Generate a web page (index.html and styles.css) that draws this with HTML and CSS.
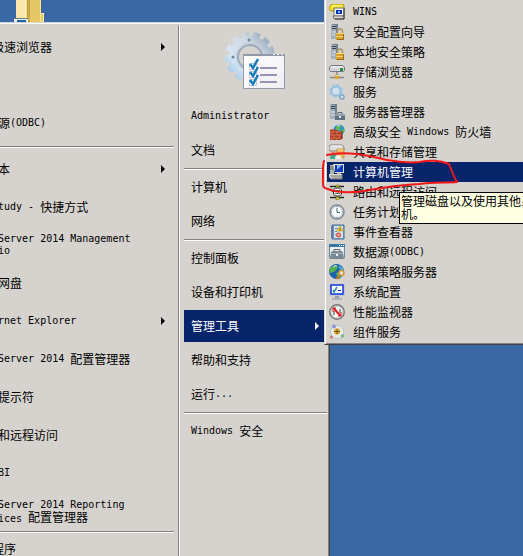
FILE: index.html
```html
<!DOCTYPE html>
<html lang="zh-CN">
<head>
<meta charset="utf-8">
<title>开始菜单</title>
<link rel="stylesheet" href="styles.css">
</head>
<body>
<svg class="folder" viewBox="0 0 34 22" aria-hidden="true">
  <path d="M3 0h24v22H3z" fill="#f3d778"/><path d="M3 0h9v18H3z" fill="#fae6ad"/><path d="M12 0h1v18h-1z" fill="#fff3c8"/>
  <path d="M14 0h3v22h-3z" fill="#c9a544"/><path d="M17 0h11v13h3v9H17z" fill="#e5c765"/><path d="M28 13h3v9h-1v-8h-2z" fill="#ffefaf"/><path d="M27 0h1v22h-1z" fill="#fae391"/>
  <path d="M1 18h14v4H1z" fill="#e9eef2"/><path d="M1 18h14v1H1z" fill="#737d86"/><path d="M4 20h9v2H4z" fill="#1c63ad"/>
</svg>
<nav class="start">
  <div class="programs">
    <a class="prog more wide" href="#">极速浏览器</a>
    <div class="prog"></div>
    <a class="prog" href="#">源<span class="lat">(ODBC)</span></a>
    <hr>
    <a class="prog more" href="#">本</a>
    <a class="prog" href="#"><span class="lat">tudy - </span>快捷方式</a>
    <a class="prog" href="#"><span class="lat">Server 2014 Management<br>io</span></a>
    <a class="prog" href="#">网盘</a>
    <a class="prog more" href="#"><span class="lat">rnet Explorer</span></a>
    <a class="prog" href="#"><span class="lat">Server 2014 </span>配置管理器</a>
    <a class="prog" href="#">提示符</a>
    <a class="prog" href="#">和远程访问</a>
    <a class="prog" href="#"><span class="lat">BI</span></a>
    <a class="prog" href="#"><span><span class="lat">Server 2014 Reporting</span><br><span class="lat">ices </span>配置管理器</span></a>
    <hr>
    <a class="prog all wide" href="#">程序</a>
  </div>
  <div class="places">
    <svg class="avatar" viewBox="0 0 64 68" aria-hidden="true">
      <defs>
        <linearGradient id="gear" gradientUnits="userSpaceOnUse" x1="8" y1="52" x2="50" y2="12"><stop offset="0" stop-color="#94bfe6"/><stop offset=".3" stop-color="#d6e6f5"/><stop offset=".7" stop-color="#cfd8e1"/><stop offset="1" stop-color="#8ea3b6"/></linearGradient>
        <linearGradient id="paper" x1="0" y1="0" x2="1" y2="1"><stop offset="0" stop-color="#fff"/><stop offset="1" stop-color="#f0ecf4"/></linearGradient>
      </defs>
      <g fill="none" stroke="url(#gear)">
        <circle cx="29" cy="30" r="16.500" stroke-width="9"/>
        <circle cx="29" cy="30" r="22" stroke-width="6" stroke-dasharray="6.500 4.133"/>
      </g>
      <circle cx="29" cy="30" r="12" fill="none" stroke="#9caaba" stroke-width="2"/>
      <circle cx="29" cy="30" r="14" fill="none" stroke="#c2cbd7" stroke-width="1"/>
      <circle cx="28" cy="13" r="1.500" fill="#71879b"/><circle cx="12" cy="30" r="1.500" fill="#71879b"/>
      <path d="M22.500 28.500h41v33h-41z" fill="url(#paper)" stroke="#9399a6"/>
      <path d="M22 27h42v2H22z" fill="#9299a8"/><path d="M52 27h2v1h-2zM56 27h2v1h-2zM60 27h2v1h-2z" fill="#e6e8ee"/>
      <path d="M39 41h17M39 48h17M39 55h17" stroke="#9993b3" stroke-width="2"/>
      <g fill="#fff" stroke="#c5c6d4"><path d="M28.500 36.500h7v6h-7zM28.500 44.500h7v6h-7zM28.500 52.500h7v6h-7z"/></g>
      <path d="M29 37l3 4 5-9M29 45l3 4 5-9M29 53l3 4 5-9" fill="none" stroke="#167bb9" stroke-width="2.500"/>
    </svg>
    <a class="place" href="#"><span class="lat">Administrator</span></a>
    <a class="place" href="#">文档</a>
    <hr>
    <a class="place" href="#">计算机</a>
    <a class="place" href="#">网络</a>
    <hr>
    <a class="place" href="#">控制面板</a>
    <a class="place" href="#">设备和打印机</a>
    <a class="place more selected" href="#">管理工具</a>
    <a class="place" href="#">帮助和支持</a>
    <a class="place" href="#">运行<span class="lat">...</span></a>
    <hr>
    <a class="place" href="#"><span class="lat">Windows </span>安全</a>
  </div>
</nav>

<nav class="tools">
  <a class="tool" href="#"><svg viewBox="0 0 16 16" aria-hidden="true"><path d="M1 2l2-2h11l1 2v3H5v2H2L0 5V3z" fill="#f5df20" stroke="#8c7900" stroke-width=".7"/><path d="M3 2h10" stroke="#fffca0"/><path d="M5 4h10v8H5z" fill="#f1f1ee" stroke="#777"/><path d="M7 6h6v4H7z" fill="#0829b8"/><path d="M9 7h2v2H9z" fill="#62ddec"/><path d="M4 12h11v3H5z" fill="#d7d7d2" stroke="#555" stroke-width=".7"/><path d="M15 4v11H6" fill="none" stroke="#333"/></svg><span class="lat">WINS</span></a>
  <a class="tool" href="#"><svg viewBox="0 0 16 16" aria-hidden="true"><path d="M2 1l2-1h5v14l-2 1H2z" fill="#71808e"/><path d="M2 1h5v14H2z" fill="#a3b0bb"/><path d="M3 2.500h4M3 4.500h4" stroke="#34424e"/><path d="M3 8h4M3 11h3" stroke="#dce4ea"/><path d="M8.500 9V7.500a2.500 2.500 0 0 1 5 0V9" fill="none" stroke="#a89462" stroke-width="1.500"/><path d="M7 9h8v7H7z" fill="#d5a02c"/><path d="M7 9h8v1H7zM7 12h8v1H7z" fill="#f4d56d"/><path d="M14 10h1v6H8v-1h6z" fill="#986b16"/></svg>安全配置向导</a>
  <a class="tool" href="#"><svg viewBox="0 0 16 16" aria-hidden="true"><path d="M2 1l2-1h5v14l-2 1H2z" fill="#71808e"/><path d="M2 1h5v14H2z" fill="#a3b0bb"/><path d="M3 2.500h4M3 4.500h4" stroke="#34424e"/><path d="M3 8h4M3 11h3" stroke="#dce4ea"/><path d="M8.500 9V7.500a2.500 2.500 0 0 1 5 0V9" fill="none" stroke="#a89462" stroke-width="1.500"/><path d="M7 9h8v7H7z" fill="#d5a02c"/><path d="M7 9h8v1H7zM7 12h8v1H7z" fill="#f4d56d"/><path d="M14 10h1v6H8v-1h6z" fill="#986b16"/></svg>本地安全策略</a>
  <a class="tool" href="#"><svg viewBox="0 0 16 16" aria-hidden="true"><path d="M2 1.500h12l1.500 2v3l-1 1h-13l-1-1v-3z" fill="#d4d3dc" stroke="#777780"/><path d="M2 3h12" stroke="#fff"/><path d="M11 4h3v3h-3z" fill="#1b9b31"/><path d="M8 8v4M1 13.500h14" stroke="#85858b" stroke-width="1.500"/><path d="M6 11h4v4H6z" fill="#dfa52c"/><path d="M7 11h2v1H7z" fill="#ffe78f"/></svg>存储浏览器</a>
  <a class="tool" href="#"><svg viewBox="0 0 16 16" aria-hidden="true"><circle cx="7" cy="7" r="4.500" fill="#e2eaef" stroke="#91bddb" stroke-width="2"/><circle cx="7" cy="7" r="6" fill="none" stroke="#9fc9e4" stroke-width="2" stroke-dasharray="2.700 2"/><circle cx="7" cy="7" r="2.500" fill="#d9dedf" stroke="#cae3f3"/><circle cx="13" cy="13" r="2" fill="#d9e4ea" stroke="#82a9c7" stroke-width="1.300"/><circle cx="13" cy="13" r="2.700" fill="none" stroke="#86afca" stroke-dasharray="1 1"/></svg>服务</a>
  <a class="tool" href="#"><svg viewBox="0 0 16 16" aria-hidden="true"><path d="M1 1l2-1h5v14l-2 1H1z" fill="#71808e"/><path d="M1 1h5v14H1z" fill="#a3b0bb"/><path d="M2 2.500h4M2 4.500h4" stroke="#34424e"/><path d="M2 8h4M2 11h3" stroke="#dce4ea"/><path d="M9 10V8.500h4V10" fill="none" stroke="#586671"/><path d="M6 10h10v6H6z" fill="#5f717e"/><path d="M6 10h10v2H6z" fill="#91a3ac"/><path d="M10 12h2v2h-2z" fill="#e0e7e9"/></svg>服务器管理器</a>
  <a class="tool" href="#"><svg viewBox="0 0 16 16" aria-hidden="true"><circle cx="10" cy="6" r="5.500" fill="#2c91cd"/><path d="M7 2l4-1 1 3-3 3-2-1zM13 5l3 1-2 4-2-2z" fill="#60b955"/><path d="M8 2l3-1" stroke="#bfe9f7"/><path d="M1 6l3-1 9 3v7l-2 1H1z" fill="#a93824"/><path d="M1 8h12M1 11h12M1 14h11M4 5v3M9 7v1M3 8v3M8 8v3M12 9v2M5 11v3M10 11v3M3 14v2M8 14v2" stroke="#e88667" stroke-width=".7"/><path d="M13 7v8" stroke="#6d2116"/></svg>高级安全<span class="lat"> Windows </span>防火墙</a>
  <a class="tool" href="#"><svg viewBox="0 0 16 16" aria-hidden="true"><path d="M1 1h12l2 2v3l-1 1H1L0 6V3z" fill="#ddd" stroke="#85817c"/><path d="M2 2h11" stroke="#fff"/><path d="M8 5h7v9H8z" fill="#ecb654" stroke="#b98835" stroke-width=".7"/><path d="M9 6h5" stroke="#ffe3a0"/><circle cx="4" cy="9" r="2" fill="#d89865"/><path d="M1 15q0-5 4-5t4 5z" fill="#44a78a"/><circle cx="9" cy="9" r="2" fill="#e0a777"/><path d="M6 15q0-4 3-4t4 4z" fill="#f0eee6"/></svg>共享和存储管理</a>
  <a class="tool selected" href="#"><svg viewBox="0 0 16 16" aria-hidden="true"><path d="M1 1h4v12H1z" fill="#adb5af"/><path d="M1 3h4M1 5h4" stroke="#5b6567"/><path d="M4 0h11v9H6z" fill="#e2e1d4"/><path d="M6 1h8v7H6z" fill="#1237bd"/><path d="M8 1h5l-5 5z" fill="#7db3ff"/><path d="M8 9h4v2H8z" fill="#aaa"/><path d="M0 10h13v5H2l-2-2z" fill="#ddd9c9"/><path d="M1 12h12M3 14h9" stroke="#747a79"/><path d="M13 10v5H2" fill="none" stroke="#777"/></svg>计算机管理</a>
  <a class="tool" href="#"><svg viewBox="0 0 16 16" aria-hidden="true"><path d="M1 2.500h14M1 13.500h14" stroke="#252a25" stroke-width="1.500"/><path d="M3 7.500h10" stroke="#252a25"/><path d="M4.500 6l2-2h4l2 2v4l-2 2h-4l-2-2z" fill="#eceee7" stroke="#252a25"/><path d="M6 6.500h5M6 9.500h5" stroke="#607360"/><path d="M7 1h3v2H7zM7 13h3v3H7z" fill="#d6c836" stroke="#55511a" stroke-width=".5"/></svg>路由和远程访问</a>
  <a class="tool" href="#"><svg viewBox="0 0 16 16" aria-hidden="true"><circle cx="8" cy="8" r="7" fill="#dfe6ea" stroke="#838a92" stroke-width="1.500"/><circle cx="8" cy="8" r="5.500" fill="#f9fcff" stroke="#b7c9d5"/><path d="M8 4v4.500h3" fill="none" stroke="#416882"/><path d="M8 2v1M8 13v1M2 8h1M13 8h1" stroke="#768d9f"/></svg>任务计划<span class="lat"> </span>程序</a>
  <a class="tool" href="#"><svg viewBox="0 0 16 16" aria-hidden="true"><path d="M3 1h12v14H3z" fill="#8bacd0" stroke="#416c9b"/><path d="M5 2h9v12H5z" fill="#d2e0ec"/><path d="M2 3h3M2 5h3M2 7h3M2 9h3M2 11h3M2 13h3" stroke="#52677e"/><path d="M6 4.500h3M6 7.500h2M6 10.500h1" stroke="#708daa"/><path d="M11 2l3.500 5h-7z" fill="#f6d23c" stroke="#be952a" stroke-width=".6"/><path d="M11 4v1.500M11 6v.7" stroke="#3b3a27"/><circle cx="9.500" cy="11" r="2.500" fill="#d9584a"/><path d="M8.500 10l2 2m0-2l-2 2" stroke="#fff" stroke-width=".7"/></svg>事件查看器</a>
  <a class="tool" href="#"><svg viewBox="0 0 16 16" aria-hidden="true"><path d="M0 0h16v14H0z" fill="#e8edf0"/><path d="M0 0h16v3H0z" fill="#3977a7"/><path d="M10 1h1v1h-1zM12 1h1v1h-1zM14 1h1v1h-1z" fill="#fff"/><path d="M.5 3v11h15V3" fill="none" stroke="#6d8b9f"/><path d="M5 8V5.500h6V8" fill="none" stroke="#586873"/><path d="M2 8l2-1h8l2 1 1 7H1z" fill="#788994"/><path d="M2 9.500h12" stroke="#a5b3bb"/><path d="M7 10h2v2H7z" fill="#f1f4f5"/></svg>数据源<span class="lat">(ODBC)</span></a>
  <a class="tool" href="#"><svg viewBox="0 0 16 16" aria-hidden="true"><circle cx="7.500" cy="7.500" r="7.500" fill="#1d60ae"/><path d="M2 3l5-2 2 3-4 4-4 1-1-3zM7 9l4-1 2 3-3 4-2-2z" fill="#55ad55"/><path d="M9 1l5 3v3l-3-1z" fill="#4eabe0"/><path d="M4 3q2-2 4-1" stroke="#d3f3db" fill="none"/><circle cx="12.500" cy="9" r="2.500" fill="#d9dddc" stroke="#d69b37" stroke-width="1.500"/><path d="M11 11l-4 4m1-2l2 2" stroke="#c27722" stroke-width="1.500"/></svg>网络策略服务器</a>
  <a class="tool" href="#"><svg viewBox="0 0 16 16" aria-hidden="true"><path d="M0 0h16v12H0z" fill="#c2c8d0"/><path d="M2 1h12v9H2z" fill="#fff" stroke="#1238dd" stroke-width="1.500"/><path d="M4 6l1 2 3-5" fill="none" stroke="#288caf" stroke-width="1.500"/><path d="M9 6.500h3" stroke="#1238dd"/><path d="M6 12h4v2H6z" fill="#969ca6"/><path d="M3 14h10v2H3z" fill="#adb4bc"/></svg>系统配置</a>
  <a class="tool" href="#"><svg viewBox="0 0 16 16" aria-hidden="true"><circle cx="8" cy="8" r="7.200" fill="#f8f9f9" stroke="#757575" stroke-width="1.500"/><circle cx="8" cy="8" r="5.500" fill="none" stroke="#c3caca"/><path d="M5 11V7M11 5v4" fill="none" stroke="#38413f"/><path d="M4.500 4l7 8" stroke="#dc1c23" stroke-width="2"/><path d="M4 8V4h3M12 8v4H9" fill="none" stroke="#dc1c23"/></svg>性能监视器</a>
  <a class="tool" href="#"><svg viewBox="0 0 16 16" aria-hidden="true"><circle cx="8" cy="8" r="6.500" fill="#e8ebed" stroke="#bcc4c8"/><circle cx="5" cy="2.500" r="2" fill="#8c94d9"/><circle cx="2.500" cy="13" r="1.500" fill="#d47470"/><circle cx="13.500" cy="12" r="1.700" fill="#70ba88"/><circle cx="8" cy="7.500" r="3.200" fill="#e1b72b"/><path d="M8 5v5M5 7.500h6" stroke="#684e19"/></svg>组件服务</a>
</nav>

<div class="tip" role="tooltip">管理磁盘以及使用其他系<br>机。</div>
<svg class="mark" viewBox="0 0 140 48" aria-hidden="true"><path d="M7 10c8-2 20-2 30-1s19 4 30 6 22 3 32 2c12-2 20-2 30 2 2 5 4 11 8 18-10 1-24 0-38 2-18 1-34 3-49 6-14 3-23 3-36 1-8-3-11-2-11-7V26c0-4 0-7 1-10"/></svg>
</body>
</html>
```
FILE: styles.css
```css
* { box-sizing: border-box; }

body {
  margin: 0;
  min-height: 100vh;
  position: relative;
  overflow: hidden;
  background: #3968a4;
  color: #000;
  font: 12px/12px "Noto Sans CJK SC", sans-serif;
}

a { color: inherit; text-decoration: none; white-space: nowrap; }

.lat { font-family: "DejaVu Sans Mono", monospace; font-size: 10px; white-space: pre; }

hr { height: 2px; margin: 0; border: 0; border-top: 1px solid #808080; background: #fff; }

.folder { position: absolute; left: 13px; top: 0; width: 34px; height: 22px; }

.start {
  display: grid;
  grid-template-columns: 178px 1fr;
  width: 330px;
  height: calc(100vh - 22px);
  margin-top: 22px;
  overflow: hidden;
  background: #d6d3ce;
  border-top: 1px solid #d6d3ce;
  border-right: 1px solid #424142;
  box-shadow: inset 0 1px #fff, inset -1px 0 #848284;
}

.programs { padding: 5px 4px 0 0; min-width: 0; }
.programs hr { margin: 4px 0 2px; }

.prog {
  position: relative;
  display: flex;
  align-items: center;
  height: 38px;
  margin-left: -2px;
}
.wide { margin-left: -8px; }
.programs .all { height: 28px; }
.programs .all, .prog + hr:nth-last-child(2) { margin-top: 1px; }

.more { justify-content: space-between; }
.more::after {
  content: "";
  margin-right: 9px;
  border: solid transparent;
  border-width: 4px 0 4px 4px;
  border-left-color: currentColor;
}

.places {
  display: flex;
  flex-direction: column;
  margin-top: 2px;
  padding: 2px 2px 0 5px;
  border-left: 1px solid #848284;
  box-shadow: inset 1px 0 #fff;
}
.places hr { flex: none; margin-top: 1px; }
.avatar { align-self: center; width: 64px; height: 68px; margin: 0 6px 4px 0; }

.place {
  display: flex;
  align-items: center;
  height: 32px;
  margin: 1px 0;
  padding-left: 7px;
}
.place.more::after { margin-right: 8px; }
.selected { background: #08246b; color: #fff; }

.tools {
  position: absolute;
  top: 0;
  left: 324px;
  right: 0;
  padding: 2px 0 0 2px;
  background: #d6d3ce;
  border-left: 1px solid #d6d3ce;
  border-bottom: 1px solid #424142;
  box-shadow: inset 1px 0 #fff, inset 0 -1px #848284;
}
.tools::after { content: ""; display: block; height: 2px; }

.tool {
  display: flex;
  align-items: center;
  height: 20px;
  padding-left: 2px;
}
.tool svg { width: 16px; height: 16px; margin-right: 8px; }

.tip {
  position: absolute;
  left: 399px;
  right: -2px;
  top: 192px;
  padding: 1px 1px 3px;
  overflow: hidden;
  white-space: nowrap;
  line-height: 13px;
  background: #ffffe1;
  border: 1px solid #000;
}

.mark { position: absolute; left: 320px; top: 145px; width: 140px; height: 48px; pointer-events: none; overflow: visible; }
.mark path { fill: none; stroke: #f01818; stroke-width: 2; stroke-linejoin: round; stroke-linecap: round; }
```
